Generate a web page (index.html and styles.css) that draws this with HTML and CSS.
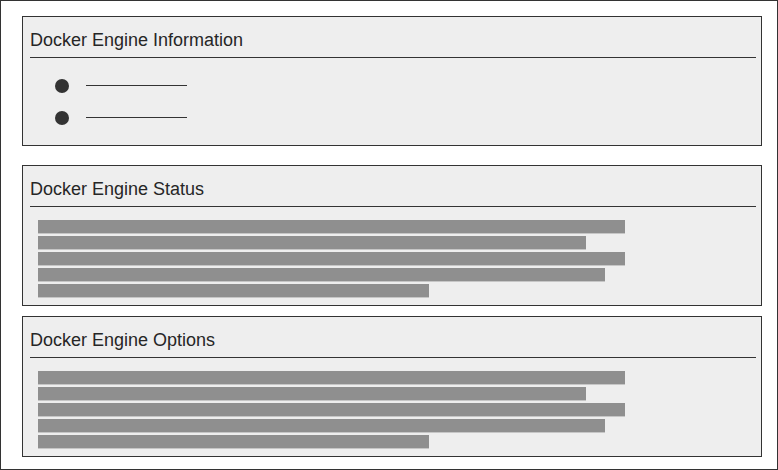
FILE: index.html
```html
<!DOCTYPE html>
<html>
<head>
<meta charset="utf-8">
<link rel="stylesheet" href="styles.css">
</head>
<body>
<div class="frame">
  <section class="panel panel-info">
    <h2 class="panel-title">Docker Engine Information</h2>
    <ul class="info-list">
      <li class="info-item"><span class="dot"></span><span class="rule"></span></li>
      <li class="info-item"><span class="dot"></span><span class="rule"></span></li>
    </ul>
  </section>
  <section class="panel panel-status">
    <h2 class="panel-title">Docker Engine Status</h2>
    <div class="bars">
      <div class="bar" style="width:587px"></div>
      <div class="bar" style="width:548px"></div>
      <div class="bar" style="width:587px"></div>
      <div class="bar" style="width:567px"></div>
      <div class="bar" style="width:391px"></div>
    </div>
  </section>
  <section class="panel panel-options">
    <h2 class="panel-title">Docker Engine Options</h2>
    <div class="bars">
      <div class="bar" style="width:587px"></div>
      <div class="bar" style="width:548px"></div>
      <div class="bar" style="width:587px"></div>
      <div class="bar" style="width:567px"></div>
      <div class="bar" style="width:391px"></div>
    </div>
  </section>
</div>
</body>
</html>
```

FILE: styles.css
```css
* { box-sizing: border-box; }
html, body { margin: 0; padding: 0; background: #ffffff; }
body { font-family: "Liberation Sans", Arial, sans-serif; color: #262626; }

.frame {
  width: 778px;
  height: 470px;
  border: 1px solid #333333;
  padding: 15px 0 0 21px;
  display: flex;
  flex-direction: column;
}

.panel {
  width: 740px;
  background: #eeeeee;
  border: 1px solid #333333;
  flex: none;
}
.panel-info { height: 130px; margin-bottom: 19px; }
.panel-status { height: 141px; margin-bottom: 10px; }
.panel-options { height: 141px; }

.panel-title {
  margin: 0 5px 0 7px;
  padding: 13px 0 7px 0;
  font-size: 18px;
  line-height: 20px;
  font-weight: normal;
  color: #262626;
  border-bottom: 1px solid #333333;
}

.info-list {
  list-style: none;
  margin: 12px 0 0 0;
  padding: 0 0 0 32px;
}
.info-item {
  height: 32px;
  display: flex;
  align-items: center;
}
.dot {
  width: 14px;
  height: 14px;
  border-radius: 50%;
  background: #333333;
  flex: none;
}
.rule {
  width: 101px;
  height: 1px;
  background: #333333;
  margin-left: 17px;
  margin-bottom: 2px;
}

.bars {
  padding: 13px 0 0 15px;
  display: flex;
  flex-direction: column;
  gap: 2px;
}
.bar {
  height: 14px;
  background: #8f8f8f;
  border-bottom: 1px solid #c6c6c6;
}
```
